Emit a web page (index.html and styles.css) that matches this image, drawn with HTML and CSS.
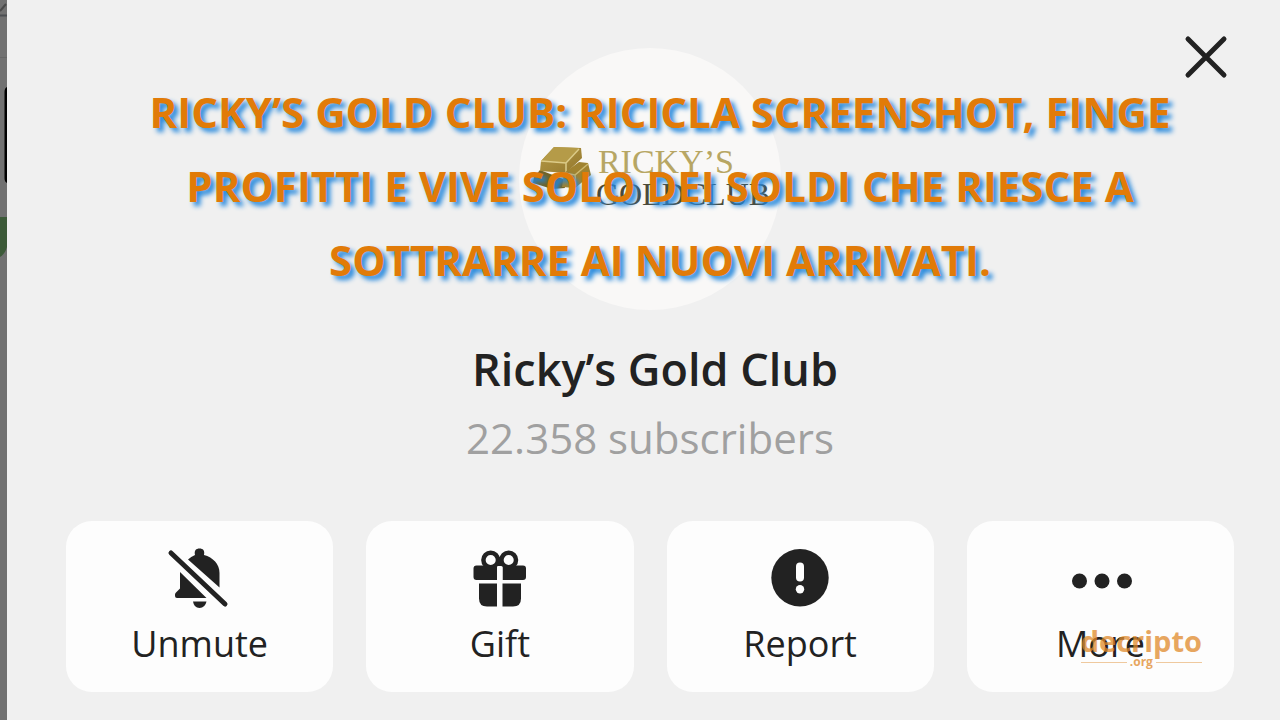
FILE: index.html
```html
<!DOCTYPE html>
<html lang="it">
<head>
<meta charset="utf-8">
<meta name="viewport" content="width=device-width, initial-scale=1">
<title>Ricky’s Gold Club</title>
<link rel="stylesheet" href="styles.css">
</head>
<body>
<div class="stage">
  <svg class="backdrop" viewBox="0 0 7 720" aria-hidden="true">
    <path d="M0 11 6 4" stroke="#4a4a4a" stroke-width="2"/>
    <path d="M0 15.500H7" stroke="#4c4f52" stroke-width="2"/>
    <path d="M0 57.500H7" stroke="#666"/>
    <path d="M7 87Q4.500 88 4.500 92V178Q4.500 182 7 183Z" fill="#000"/>
    <path d="M0 217H7V247Q5 254 0 257Z" fill="#3c5a38"/>
  </svg>
  <main class="panel">
    <button class="close" type="button" aria-label="Close">
      <svg viewBox="0 0 44 44" width="44" height="44"><path d="M4 4 40 40M40 4 4 40" fill="none" stroke="#222" stroke-width="5" stroke-linecap="round"/></svg>
    </button>
    <div class="avatar">
      <svg class="bars" viewBox="0 0 60 44" width="60" height="44" aria-hidden="true">
        <defs>
          <linearGradient id="gold" x1="0" y1="0" x2="1" y2="1"><stop offset="0" stop-color="#b59a48"/><stop offset="1" stop-color="#94782c"/></linearGradient>
        </defs>
        <path d="M2 31 8 24 31 33 33 42 20 43 1 37Z" fill="#75621f"/>
        <path d="M9 15 22 1 49 2 50 12 34 27 8 25Z" fill="url(#gold)"/>
        <path d="M9 15 22 1 47 2 34 17Z" fill="#b59b48"/>
        <path d="M9 15 34 17 47 3M34 17 34 26" fill="none" stroke="#dccb88" stroke-width="1.500"/>
        <path d="M32 27 47 16 56 17 59 29 43 42 30 41Z" fill="#a08330"/>
        <path d="M32 27 43 29 56 18M43 29 44 40" fill="none" stroke="#cdb970" stroke-width="1.500"/>
      </svg>
      <div class="logo-text">
        <span class="logo-top">RICKY’S</span>
        <span class="logo-bottom">GOLDCLUB</span>
      </div>
    </div>
    <h2 class="name">Ricky’s Gold Club</h2>
    <p class="subscribers">22.358 subscribers</p>
    <div class="actions">
      <button class="action" type="button">
        <svg class="icon" viewBox="0 0 60 60" aria-hidden="true">
          <path d="M1 5 55 56" fill="none" stroke="#222" stroke-width="5" stroke-linecap="round"/>
          <path d="M18 11.500Q21 8.500 25 7C24 2.500 26 .5 29.500 .5S35 2.500 34 7C43 9.500 49.500 16 49.500 25V39.500Z"/>
          <path d="M10 24 36.500 50H7Q5 50 5 48V46.500Q5 45.500 6 44.500L10 40.500Z"/>
          <path d="M23 53.500H36.500Q35 60 29.500 60T23 53.500Z"/>
        </svg>
        <span>Unmute</span>
      </button>
      <button class="action" type="button">
        <svg class="icon" viewBox="0 0 60 60" aria-hidden="true">
          <circle cx="20.700" cy="12" r="7.300" fill="none" stroke="#222" stroke-width="4.500"/>
          <circle cx="38.700" cy="12" r="7.300" fill="none" stroke="#222" stroke-width="4.500"/>
          <path d="M27.500 9H32V18H27.500Z"/>
          <path d="M6.500 17.500H27V32H6.500Q3.500 32 3.500 29V20.500Q3.500 17.500 6.500 17.500ZM32.500 17.500H53Q56 17.500 56 20.500V29Q56 32 53 32H32.500ZM9 35.500H27V58.500H17Q9 58.500 9 50.500ZM32.500 35.500H51V50.500Q51 58.500 43 58.500H32.500Z"/>
          <path d="M27 18.500H32.500V32H27Z" fill="#fdfdfd"/>
        </svg>
        <span>Gift</span>
      </button>
      <button class="action" type="button">
        <svg class="icon" viewBox="0 0 60 60" aria-hidden="true">
          <circle cx="30" cy="29.700" r="28.700"/>
          <rect x="26" y="14.500" width="8" height="19" rx="4" fill="#fdfdfd"/>
          <circle cx="30" cy="41.300" r="4.200" fill="#fdfdfd"/>
        </svg>
        <span>Report</span>
      </button>
      <button class="action" type="button">
        <svg class="icon" viewBox="0 0 60 60" aria-hidden="true">
          <circle cx="9.500" cy="33" r="7.500"/><circle cx="32" cy="33" r="7.500"/><circle cx="54.500" cy="33" r="7.500"/>
        </svg>
        <span>More</span>
      </button>
    </div>
  </main>
  <h1 class="headline">RICKY’S GOLD CLUB: RICICLA SCREENSHOT, FINGE<br>PROFITTI E VIVE SOLO DEI SOLDI CHE RIESCE A<br>SOTTRARRE AI NUOVI ARRIVATI.</h1>
  <div class="watermark">
    <span class="brand">decripto</span>
    <span class="domain">.org</span>
  </div>
</div>
</body>
</html>
```

FILE: styles.css
```css
* {
  box-sizing: border-box;
}

body {
  margin: 0;
  background: #717171;
  color: #222;
  font-family: "Open Sans", "Noto Sans", sans-serif;
}

.stage {
  position: relative;
  display: flex;
  min-height: 100vh;
  overflow: hidden;
}

.backdrop {
  flex: none;
  width: 7px;
  height: 720px;
}

.panel {
  position: relative;
  flex: 1;
  display: flex;
  flex-direction: column;
  align-items: center;
  padding: 48px 46px 28px 59px;
  background: #f0f0f0;
}

button {
  border: 0;
  padding: 0;
  color: inherit;
  font: inherit;
  cursor: pointer;
}

.close {
  position: absolute;
  top: 35px;
  right: 52px;
  display: flex;
  background: none;
}

.avatar {
  display: flex;
  justify-content: center;
  gap: 4px;
  width: 262px;
  height: 262px;
  padding: 98px 0 0 2px;
  border-radius: 50%;
  background: #f9f8f7;
}

.logo-text {
  display: flex;
  flex-direction: column;
  font-family: "Liberation Serif", serif;
  line-height: 32px;
}

.logo-top {
  padding-left: 2px;
  color: #b7a663;
  font-size: 34px;
}

.logo-bottom {
  color: #4b4a3a;
  font-size: 32px;
}

.name {
  margin: 29px 0 0;
  padding-left: 10px;
  font-size: 45px;
  font-weight: 600;
  line-height: 60px;
}

.subscribers {
  margin: 9px 0 0;
  color: #a0a0a0;
  font-size: 42px;
  line-height: 60px;
}

.actions {
  display: grid;
  grid-template-columns: repeat(4, 1fr);
  gap: 33px;
  width: 100%;
  margin-top: 53px;
}

.action {
  display: flex;
  flex-direction: column;
  align-items: center;
  gap: 12px;
  padding: 27px 0 24px;
  border-radius: 26px;
  background: #fdfdfd;
  font-size: 36px;
  line-height: 48px;
}

.icon {
  width: 60px;
  height: 60px;
  overflow: visible;
  fill: #222;
}

.headline {
  position: absolute;
  top: 75px;
  left: 40px;
  right: 0;
  margin: 0;
  color: #e17b08;
  font-size: 42px;
  font-weight: 700;
  line-height: 74px;
  text-align: center;
  text-shadow: 4px 4px 5px #2186dc;
}

.watermark {
  position: absolute;
  right: 78px;
  bottom: 51px;
  display: flex;
  flex-direction: column;
  align-items: center;
  color: #e08a2b;
  font-family: "Open Sans", sans-serif;
  font-weight: 700;
  opacity: 0.75;
}

.brand {
  font-size: 29px;
  line-height: 28px;
}

.domain {
  display: flex;
  align-items: center;
  gap: 3px;
  width: 100%;
  font-size: 12px;
  line-height: 14px;
}

.domain::before,
.domain::after {
  content: "";
  flex: 1;
  height: 1px;
  background: currentColor;
  opacity: 0.6;
}
```
